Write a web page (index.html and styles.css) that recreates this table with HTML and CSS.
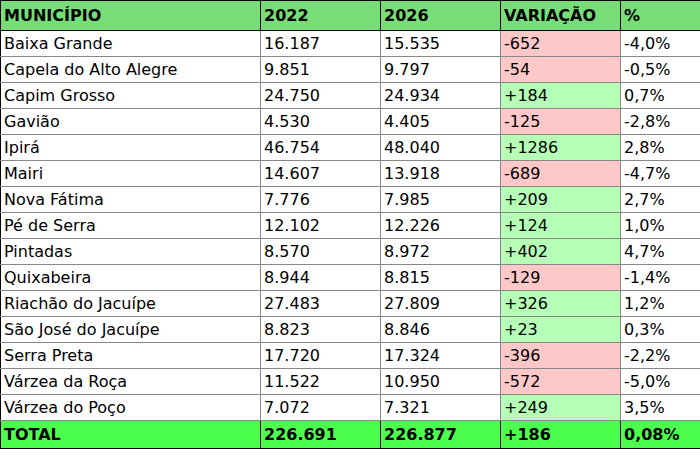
FILE: index.html
```html
<!DOCTYPE html>
<html lang="pt">
<head>
<meta charset="utf-8">
<link rel="stylesheet" href="styles.css">
</head>
<body>
<table class="tbl">
<colgroup>
<col class="c1"><col class="c2"><col class="c3"><col class="c4"><col class="c5">
</colgroup>
<thead>
<tr><th>MUNICÍPIO</th><th>2022</th><th>2026</th><th>VARIAÇÃO</th><th>%</th></tr>
</thead>
<tbody>
<tr><td>Baixa Grande</td><td>16.187</td><td>15.535</td><td class="neg">-652</td><td>-4,0%</td></tr>
<tr><td>Capela do Alto Alegre</td><td>9.851</td><td>9.797</td><td class="neg">-54</td><td>-0,5%</td></tr>
<tr><td>Capim Grosso</td><td>24.750</td><td>24.934</td><td class="pos">+184</td><td>0,7%</td></tr>
<tr><td>Gavião</td><td>4.530</td><td>4.405</td><td class="neg">-125</td><td>-2,8%</td></tr>
<tr><td>Ipirá</td><td>46.754</td><td>48.040</td><td class="pos">+1286</td><td>2,8%</td></tr>
<tr><td>Mairi</td><td>14.607</td><td>13.918</td><td class="neg">-689</td><td>-4,7%</td></tr>
<tr><td>Nova Fátima</td><td>7.776</td><td>7.985</td><td class="pos">+209</td><td>2,7%</td></tr>
<tr><td>Pé de Serra</td><td>12.102</td><td>12.226</td><td class="pos">+124</td><td>1,0%</td></tr>
<tr><td>Pintadas</td><td>8.570</td><td>8.972</td><td class="pos">+402</td><td>4,7%</td></tr>
<tr><td>Quixabeira</td><td>8.944</td><td>8.815</td><td class="neg">-129</td><td>-1,4%</td></tr>
<tr><td>Riachão do Jacuípe</td><td>27.483</td><td>27.809</td><td class="pos">+326</td><td>1,2%</td></tr>
<tr><td>São José do Jacuípe</td><td>8.823</td><td>8.846</td><td class="pos">+23</td><td>0,3%</td></tr>
<tr><td>Serra Preta</td><td>17.720</td><td>17.324</td><td class="neg">-396</td><td>-2,2%</td></tr>
<tr><td>Várzea da Roça</td><td>11.522</td><td>10.950</td><td class="neg">-572</td><td>-5,0%</td></tr>
<tr><td>Várzea do Poço</td><td>7.072</td><td>7.321</td><td class="pos">+249</td><td>3,5%</td></tr>
</tbody>
<tfoot>
<tr><td>TOTAL</td><td>226.691</td><td>226.877</td><td>+186</td><td>0,08%</td></tr>
</tfoot>
</table>
</body>
</html>
```
FILE: styles.css
```css
html, body {
  margin: 0;
  padding: 0;
  background: #ffffff;
}
body {
  font-family: "DejaVu Sans", sans-serif;
  font-size: 16px;
  color: #000;
}
.tbl {
  border-collapse: collapse;
  width: 700px;
  table-layout: fixed;
}
.c1 { width: 260px; }
.c2 { width: 120px; }
.c3 { width: 120px; }
.c4 { width: 120px; }
.c5 { width: 80px; }
.tbl th, .tbl td {
  text-align: left;
  padding: 0 3px;
  white-space: nowrap;
  overflow: hidden;
}
.tbl th {
  background: #77dd77;
  border: 1px solid #000;
  line-height: 29px;
  font-weight: bold;
}
.tbl tbody td {
  border: 1px solid #888;
  line-height: 25px;
}
.tbl tbody tr:first-child td {
  border-top-color: #000;
}
.tbl tbody td:first-child { border-left-color: #000; }
.tbl tbody td:last-child { border-right-color: #000; }
.neg { background: #ffc8c8; }
.pos { background: #b6ffb6; }
.tbl tfoot td {
  background: #4dff4d;
  border: 1px solid #000;
  line-height: 27px;
  font-weight: bold;
}
```
